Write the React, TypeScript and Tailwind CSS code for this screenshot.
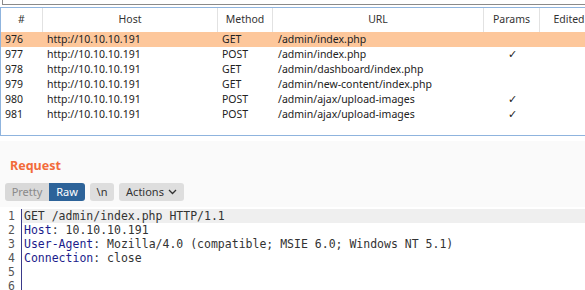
import React from "react";

const rows = [
  { n: "976", host: "http://10.10.10.191", method: "GET", url: "/admin/index.php", params: false, sel: true },
  { n: "977", host: "http://10.10.10.191", method: "POST", url: "/admin/index.php", params: true },
  { n: "978", host: "http://10.10.10.191", method: "GET", url: "/admin/dashboard/index.php", params: false },
  { n: "979", host: "http://10.10.10.191", method: "GET", url: "/admin/new-content/index.php", params: false },
  { n: "980", host: "http://10.10.10.191", method: "POST", url: "/admin/ajax/upload-images", params: true },
  { n: "981", host: "http://10.10.10.191", method: "POST", url: "/admin/ajax/upload-images", params: true },
];

const ui = { fontFamily: '"Noto Sans", "Open Sans", sans-serif' };
const mono = { fontFamily: '"DejaVu Sans Mono", "Liberation Mono", monospace' };

export default function App() {
  return (
    <div className="w-[585px] h-[290px] overflow-hidden bg-white text-[#222]" style={ui}>
      <div className="ml-[2px] h-[5px] border-l border-b border-[#8a8a8a]" />
      <div className="mt-[2px] h-[129px] border-t border-l border-b border-[#8fb4de] overflow-hidden">
        <div className="flex h-[24px] items-center text-[10.5px] text-[#333] whitespace-nowrap">
          <div className="w-[42px] shrink-0 text-center border-r border-[#e2e2e2] h-full flex items-center justify-center">#</div>
          <div className="w-[175px] shrink-0 text-center border-r border-[#e2e2e2] h-full flex items-center justify-center">Host</div>
          <div className="w-[55px] shrink-0 text-center border-r border-[#e2e2e2] h-full flex items-center justify-center">Method</div>
          <div className="w-[211px] shrink-0 text-center border-r border-[#e2e2e2] h-full flex items-center justify-center">URL</div>
          <div className="w-[56px] shrink-0 text-center border-r border-[#e2e2e2] h-full flex items-center justify-center">Params</div>
          <div className="w-[58px] shrink-0 text-center h-full flex items-center justify-center">Edited</div>
        </div>
        {rows.map((r) => (
          <div
            key={r.n}
            className={`flex h-[15px] items-center text-[10.5px] whitespace-nowrap ${r.sel ? "bg-[#fdc79b]" : ""}`}
          >
            <div className="w-[42px] shrink-0 pl-[4px]">{r.n}</div>
            <div className="w-[175px] shrink-0 pl-[4px]">{r.host}</div>
            <div className="w-[55px] shrink-0 pl-[4px]">{r.method}</div>
            <div className="w-[211px] shrink-0 pl-[5px]">{r.url}</div>
            <div className="w-[56px] shrink-0 text-center">{r.params ? "✓" : ""}</div>
            <div className="w-[58px] shrink-0" />
          </div>
        ))}
      </div>
      <div className="mt-[5px] h-[66px] bg-[#fafafa] flex flex-col">
        <div className="pl-[10px] pt-[17px] h-[42px] text-[12.5px] font-bold text-[#f26b3a] leading-[16px]">Request</div>
        <div className="flex items-center pl-[5px] h-[18px] text-[11px]">
          <div className="flex h-[18px] rounded-[3px] overflow-hidden">
            <div className="w-[44px] bg-[#d9d9d9] text-[#8a8a8a] flex items-center justify-center">Pretty</div>
            <div className="w-[36px] bg-[#2d6399] text-white flex items-center justify-center">Raw</div>
          </div>
          <div className="ml-[5px] w-[24px] h-[18px] rounded-[3px] bg-[#dedede] text-[#333] flex items-center justify-center">\n</div>
          <div className="ml-[5px] w-[65px] h-[18px] rounded-[3px] bg-[#dedede] text-[#333] flex items-center justify-center gap-[4px]">
            <span>Actions</span>
            <svg width="9" height="6" viewBox="0 0 9 6" fill="none">
              <path d="M1 1l3.5 3.5L8 1" stroke="#333" strokeWidth="1.3" />
            </svg>
          </div>
        </div>
      </div>
      <div className="mt-[2px] flex text-[11.5px] leading-[14px]" style={mono}>
        <div className="w-[22px] shrink-0 border-r border-[#3a3a8a] text-right pr-[6px] text-[#555]">
          {[1, 2, 3, 4, 5, 6].map((n) => (
            <div key={n} className="h-[14px]">{n}</div>
          ))}
        </div>
        <div className="flex-1 whitespace-pre text-[#333]">
          <div className="h-[14px] bg-[#efefef] pl-[2px]">GET /admin/index.php HTTP/1.1</div>
          <div className="h-[14px] pl-[2px]"><span className="text-[#1c1c8c]">Host</span>: 10.10.10.191</div>
          <div className="h-[14px] pl-[2px]"><span className="text-[#1c1c8c]">User-Agent</span>: Mozilla/4.0 (compatible; MSIE 6.0; Windows NT 5.1)</div>
          <div className="h-[14px] pl-[2px]"><span className="text-[#1c1c8c]">Connection</span>: close</div>
          <div className="h-[14px]" />
          <div className="h-[14px]" />
        </div>
      </div>
    </div>
  );
}
